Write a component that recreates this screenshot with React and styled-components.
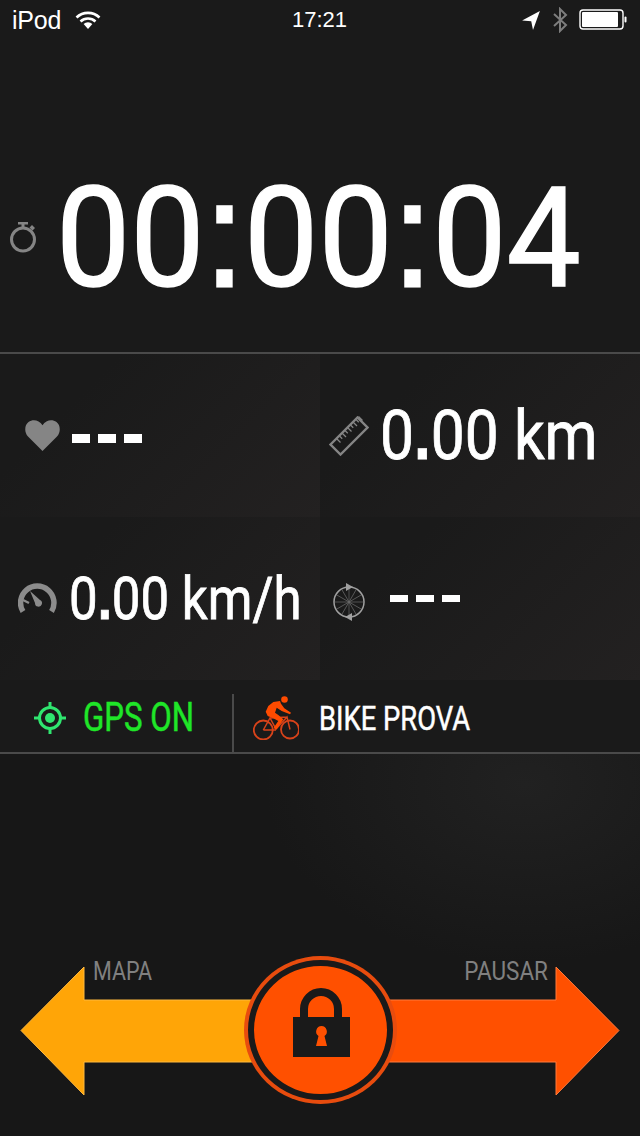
import React from 'react';
import styled, { createGlobalStyle } from 'styled-components';

const GlobalStyle = createGlobalStyle`
  html, body { margin: 0; padding: 0; background: #1a1a1a; }
  body { font-family: Roboto, "Liberation Sans", sans-serif; }
`;

const Page = styled.div`
  width: 640px;
  height: 1136px;
  overflow: hidden;
  display: flex;
  flex-direction: column;
  background: #1a1a1a;
  color: #fff;
`;

const StatusBar = styled.div`
  height: 40px;
  padding: 0 13px 0 12px;
  display: grid;
  grid-template-columns: 1fr auto 1fr;
  align-items: center;
  font-family: "Liberation Sans", sans-serif;
  font-size: 22px;
`;

const StatusSide = styled.div`
  display: flex;
  align-items: center;
  gap: ${p => p.$gap}px;
  justify-content: ${p => (p.$right ? 'flex-end' : 'flex-start')};
`;

const Carrier = styled.span`
  font-size: 25px;
  letter-spacing: -0.2px;
`;

const Icon = styled.svg`
  display: block;
  flex: none;
  margin-top: ${p => p.$drop || 0}px;
  margin-bottom: ${p => p.$lift || 0}px;
`;

const TimerRow = styled.div`
  height: 314px;
  display: flex;
  align-items: center;
  padding: 76px 0 0 9px;
  gap: 19px;
  box-sizing: border-box;
  border-bottom: 2px solid #4a4a4a;
`;

const TimerText = styled.div`
  font-size: 140px;
  line-height: 1;
  -webkit-text-stroke: 1.5px #fff;
  white-space: nowrap;
  transform: scaleX(0.945);
  transform-origin: left center;
`;

const Colon = styled.span`
  font-family: "Liberation Sans", sans-serif;
  font-size: 150px;
  -webkit-text-stroke: 3px #fff;
`;

const Stats = styled.div`
  display: grid;
  grid-template-columns: 320px 320px;
  grid-template-rows: 163px 163px;
`;

const Cell = styled.div`
  display: flex;
  align-items: center;
  padding-left: ${p => p.$pad}px;
  gap: ${p => p.$gap}px;
  background: linear-gradient(135deg, #1a1a1a 25%, #232121 100%);
`;

const Value = styled.div`
  font-size: ${p => p.$size}px;
  line-height: 1;
  -webkit-text-stroke: 0.8px #fff;
  white-space: nowrap;
  transform: scaleX(${p => p.$scale});
  transform-origin: left center;
`;

const Dot = styled.span`
  font-family: "Liberation Sans", sans-serif;
  font-weight: 700;
`;

const Dashes = styled.div`
  display: flex;
  gap: 8px;
  margin-top: ${p => p.$drop || 0}px;
`;

const Dash = styled.span`
  width: 18px;
  height: ${p => p.$h}px;
  background: #fff;
`;

const InfoRow = styled.div`
  height: 74px;
  box-sizing: border-box;
  display: flex;
  align-items: stretch;
  border-bottom: 2px solid #4a4a4a;
  padding-top: 14px;
`;

const GpsBlock = styled.div`
  width: 234px;
  display: flex;
  align-items: center;
  padding: 0 0 10px 34px;
  gap: 17px;
  box-sizing: border-box;
  border-right: 2px solid #4a4a4a;
`;

const BikeBlock = styled.div`
  display: flex;
  align-items: center;
  padding: 0 0 10px 19px;
  gap: 20px;
`;

const InfoText = styled.span`
  font-size: ${p => p.$size}px;
  color: ${p => p.$color};
  -webkit-text-stroke: 0.5px ${p => p.$color};
  line-height: 1;
  white-space: nowrap;
  transform: scaleX(${p => p.$scale});
  transform-origin: left center;
`;

const Footer = styled.div`
  flex: 1;
  display: flex;
  flex-direction: column;
  justify-content: flex-end;
  padding-bottom: 31px;
  background: radial-gradient(ellipse 260px 180px at 82% 30px, #212121 0%, #171717 100%);
`;

const ArrowRow = styled.div`
  position: relative;
  display: flex;
  align-items: center;
  justify-content: center;
  height: 148px;
  padding: 0 20px;
`;

const ArrowLabel = styled.span`
  position: absolute;
  top: 2px;
  ${p => (p.$right ? 'right: 92px;' : 'left: 93px;')}
  font-size: 25px;
  line-height: 1;
  color: #808080;
  transform: scaleX(${p => (p.$right ? 0.9 : 0.86)});
  transform-origin: ${p => (p.$right ? 'right' : 'left')} center;
`;

const LockButton = styled.div`
  position: absolute;
  left: 244px;
  top: -1px;
  width: 153px;
  height: 148px;
  box-sizing: border-box;
  border-radius: 50%;
  background: #e84c0e;
  display: flex;
  align-items: center;
  justify-content: center;
`;

const LockInner = styled.div`
  width: 145px;
  height: 140px;
  box-sizing: border-box;
  border-radius: 50%;
  border: 6px solid #1a1a1a;
  flex: none;
  display: flex;
  align-items: center;
  justify-content: center;
  background: #ff5000;
`;

const Wifi = () => (
  <Icon width="26" height="20" viewBox="0 0 26 20">
    <path d="M1.5 7.5a16.5 16.5 0 0 1 23 0" fill="none" stroke="#fff" strokeWidth="2.6" />
    <path d="M5.5 11.5a11 11 0 0 1 15 0" fill="none" stroke="#fff" strokeWidth="2.6" />
    <path d="M13 19l-4.4-5a6.4 6.4 0 0 1 8.8 0z" fill="#fff" />
  </Icon>
);

const Location = () => (
  <Icon width="20" height="20" viewBox="0 0 18 18">
    <path d="M17 1L1 9.5l8.2.6 1.6 7.900z" fill="#fff" />
  </Icon>
);

const Bluetooth = () => (
  <Icon width="16" height="26" viewBox="0 0 16 26">
    <path d="M2 7l12 11-6 6V2l6 6L2 19" fill="none" stroke="#7d7d7d" strokeWidth="2" />
  </Icon>
);

const Battery = () => (
  <Icon width="48" height="22" viewBox="0 0 48 22">
    <rect x="1" y="1" width="43" height="19" rx="3" fill="none" stroke="#fff" strokeWidth="1.4" />
    <rect x="3" y="3" width="36" height="15" rx="1" fill="#fff" />
    <rect x="45.5" y="7.5" width="2" height="6" rx="1" fill="#fff" />
  </Icon>
);

const Stopwatch = () => (
  <Icon width="28" height="32" viewBox="0 0 28 32" $drop={6}>
    <circle cx="14" cy="18.5" r="11.5" fill="none" stroke="#858585" strokeWidth="3" />
    <path d="M9 1h10v2.500h-10zM12.500 3h3v4h-3zM23 4l3 3-2.500 2.500-3-3z" fill="#858585" />
  </Icon>
);

const Heart = () => (
  <Icon width="35" height="31" viewBox="0 0 35 31">
    <path d="M17.500 31L3 16.500C-1 12-.500 5 3.500 2c4.500-3.200 10.500-2 14 3.200C21-.000 27-1.200 31.500 2c4 3 4.500 10 .500 14.500z" fill="#858585" />
  </Icon>
);

const rulerTicks = [0, 1, 2, 3, 4, 5, 6, 7, 8];

const Ruler = () => (
  <Icon width="40" height="40" viewBox="0 0 40 40">
    <path d="M1.500 28.500L28.500 1.500 38.500 11.500 11.500 38.500z" fill="none" stroke="#858585" strokeWidth="2.400" />
    {rulerTicks.map(i => (
      <line
        key={i}
        x1={7.500 + i * 2.750}
        y1={22.500 - i * 2.750}
        x2={i % 2 ? 10.500 + i * 2.750 : 11.500 + i * 2.750}
        y2={i % 2 ? 25.500 - i * 2.750 : 26.500 - i * 2.750}
        stroke="#858585"
        strokeWidth="1.300"
      />
    ))}
  </Icon>
);

const Gauge = () => (
  <Icon width="39" height="31" viewBox="0 0 39 31">
    <path d="M5 28.500A16.700 16.700 0 1 1 33.500 28.500" fill="none" stroke="#8c8c8c" strokeWidth="5.500" />
    <path d="M12 8L22 17a3.500 3.500 0 1 1-5 3z" fill="#8c8c8c" />
    <path d="M5 17l6 3" stroke="#8c8c8c" strokeWidth="2.500" />
  </Icon>
);

const spokes = [0, 30, 60, 90, 120, 150];

const Wheel = () => (
  <Icon width="34" height="40" viewBox="0 0 34 40" $drop={6}>
    <circle cx="17" cy="20" r="15" fill="none" stroke="#a0a0a0" strokeWidth="1.500" />
    <g stroke="#6a6a6a" strokeWidth="0.700">
      {spokes.map(a => (
        <line key={a} x1="17" y1="6" x2="17" y2="34" transform={`rotate(${a} 17 20)`} />
      ))}
    </g>
    <path d="M14 1l7 4-7 4zM20 31l-7 4 7 4z" fill="#a0a0a0" />
  </Icon>
);

const Target = () => (
  <Icon width="32" height="32" viewBox="0 0 32 32">
    <circle cx="16" cy="16" r="10.500" fill="none" stroke="#2fe66f" strokeWidth="3" />
    <circle cx="16" cy="16" r="5" fill="#2fe66f" />
    <path d="M16 0v6M16 26v6M0 16h6M26 16h6" stroke="#2fe66f" strokeWidth="3" />
  </Icon>
);

const Cyclist = () => (
  <Icon width="46" height="44" viewBox="8 5 46 44">
    <circle cx="18.300" cy="39" r="9.500" fill="none" stroke="#d8431a" strokeWidth="1.800" />
    <circle cx="45" cy="38.500" r="9" fill="none" stroke="#d8431a" strokeWidth="1.800" />
    <path d="M18.300 39L25 27 31 38 42 26 45 38.500M25 27L42 26M18.300 39H31" fill="none" stroke="#d8431a" strokeWidth="1.500" />
    <circle cx="39.500" cy="8.500" r="3.300" fill="#ff4b00" />
    <path d="M35 10L28.300 11 23.300 15 20.700 20.700 22.700 25 28.300 27.300 33.300 30 28.300 37.300 31.700 38.300 38.300 28.300 33.300 24 30 21.700 31.700 16.700 36.700 20 45 23.300 46 21.700 39.300 17.300 36 12.700z" fill="#ff4b00" />
  </Icon>
);

const Lock = () => (
  <Icon width="58" height="70" viewBox="0 0 58 70" $lift={14}>
    <path d="M12 32V21a17 17 0 0 1 34 0v11" fill="none" stroke="#1a1a1a" strokeWidth="8" />
    <path fillRule="evenodd" fill="#1a1a1a" d="M1 29h57v40H1zM29.500 38a5.500 5.500 0 0 0-3 10l-2.500 10h11l-2.500-10a5.500 5.500 0 0 0-3-10z" />
  </Icon>
);

const Arrows = () => (
  <Icon width="600" height="130" viewBox="0 0 600 130">
    <path d="M1 64.500L64 1v33h236v62H64v33z" fill="#ffa507" stroke="#ffb93f" strokeWidth="1" />
    <path d="M599 64.500L536 1v33H300v62h236v33z" fill="#ff5000" stroke="#ff7b3d" strokeWidth="1" />
  </Icon>
);

export default function App() {
  return (
    <Page>
      <GlobalStyle />
      <StatusBar>
        <StatusSide $gap={14}>
          <Carrier>iPod</Carrier>
          <Wifi />
        </StatusSide>
        <span>17:21</span>
        <StatusSide $right $gap={11}>
          <Location />
          <Bluetooth />
          <Battery />
        </StatusSide>
      </StatusBar>

      <TimerRow>
        <Stopwatch />
        <TimerText>00<Colon>:</Colon>00<Colon>:</Colon>04</TimerText>
      </TimerRow>

      <Stats>
        <Cell $pad={25} $gap={12}>
          <Heart />
          <Dashes $drop={5}><Dash $h={9} /><Dash $h={9} /><Dash $h={9} /></Dashes>
        </Cell>
        <Cell $pad={9} $gap={11}>
          <Ruler />
          <Value $size={68} $scale={0.89}>0<Dot>.</Dot>00 km</Value>
        </Cell>
        <Cell $pad={18} $gap={12}>
          <Gauge />
          <Value $size={60} $scale={0.85}>0<Dot>.</Dot>00 km/h</Value>
        </Cell>
        <Cell $pad={12} $gap={24}>
          <Wheel />
          <Dashes><Dash $h={7} /><Dash $h={7} /><Dash $h={7} /></Dashes>
        </Cell>
      </Stats>

      <InfoRow>
        <GpsBlock>
          <Target />
          <InfoText $size={40} $scale={0.78} $color="#1fe628">GPS ON</InfoText>
        </GpsBlock>
        <BikeBlock>
          <Cyclist />
          <InfoText $size={33} $scale={0.83} $color="#fff">BIKE PROVA</InfoText>
        </BikeBlock>
      </InfoRow>

      <Footer>
        <ArrowRow>
          <Arrows />
          <ArrowLabel>MAPA</ArrowLabel>
          <ArrowLabel $right>PAUSAR</ArrowLabel>
          <LockButton>
            <LockInner>
              <Lock />
            </LockInner>
          </LockButton>
        </ArrowRow>
      </Footer>
    </Page>
  );
}
